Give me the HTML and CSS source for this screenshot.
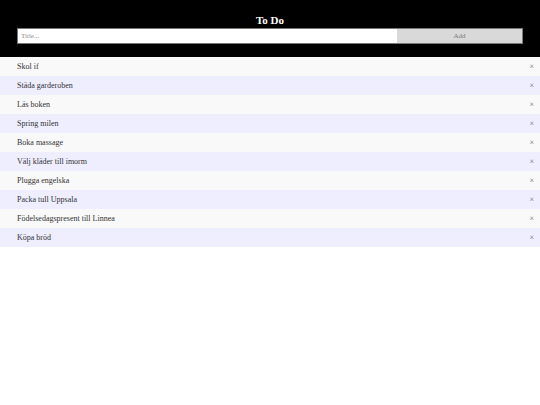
FILE: index.html
```html
<!DOCTYPE html>
<html>
<head>
<meta charset="utf-8">
<link rel="stylesheet" href="styles.css">
</head>
<body>
<div class="header">
  <h2 class="title">To Do</h2>
  <div class="form">
    <input class="title-input" type="text" placeholder="Title...">
    <span class="add-btn">Add</span>
  </div>
</div>
<ul class="list">
  <li class="item"><span>Skol if</span><span class="close">×</span></li>
  <li class="item"><span>Städa garderoben</span><span class="close">×</span></li>
  <li class="item"><span>Läs boken</span><span class="close">×</span></li>
  <li class="item"><span>Spring milen</span><span class="close">×</span></li>
  <li class="item"><span>Boka massage</span><span class="close">×</span></li>
  <li class="item"><span>Välj kläder till imorm</span><span class="close">×</span></li>
  <li class="item"><span>Plugga engelska</span><span class="close">×</span></li>
  <li class="item"><span>Packa tull Uppsala</span><span class="close">×</span></li>
  <li class="item"><span>Födelsedagspresent till Linnea</span><span class="close">×</span></li>
  <li class="item"><span>Köpa bröd</span><span class="close">×</span></li>
</ul>
</body>
</html>
```
FILE: styles.css
```css
html, body {
  margin: 0;
  padding: 0;
  background: #fff;
  font-family: "Liberation Serif", "Times New Roman", serif;
}
.header {
  background: #000;
  height: 57px;
  box-sizing: border-box;
  padding: 14px 17px 0 17px;
}
.title {
  margin: 0;
  color: #fff;
  font-size: 11px;
  font-weight: bold;
  text-align: center;
  line-height: 13px;
}
.form {
  display: flex;
  margin-top: 1px;
  height: 16px;
}
.title-input {
  flex: 0 0 380px;
  box-sizing: border-box;
  height: 16px;
  margin: 0;
  border: 1px solid #767676;
  border-right: none;
  padding: 0 3px;
  font-family: "Liberation Serif", serif;
  font-size: 7px;
  background: #fff;
  outline: none;
}
.title-input::placeholder {
  color: #8a8a8a;
}
.add-btn {
  flex: 0 0 126px;
  box-sizing: border-box;
  height: 16px;
  background: #d9d9d9;
  border: 1px solid #7a7a7a;
  border-left: none;
  color: #777;
  font-size: 7px;
  text-align: center;
  line-height: 14px;
}
.list {
  list-style: none;
  margin: 0;
  padding: 0;
}
.item {
  display: flex;
  justify-content: space-between;
  align-items: center;
  height: 19px;
  padding: 0 6px 0 17px;
  font-size: 8px;
  color: #333;
  background: #f9f9f9;
}
.item:nth-child(even) {
  background: #eeeeff;
}
.close {
  color: #666;
  font-size: 8px;
}
```
